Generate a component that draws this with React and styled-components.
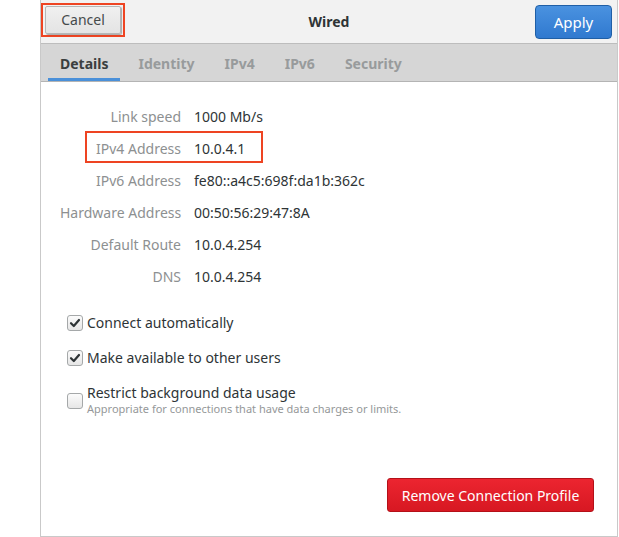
import React from 'react';
import styled, { createGlobalStyle } from 'styled-components';

const GlobalStyle = createGlobalStyle`
  html, body {
    margin: 0;
    padding: 0;
    background: #ffffff;
  }
  body {
    font-family: "Noto Sans", "Open Sans", sans-serif;
    color: #2e3436;
  }
`;

const details = [
  { label: 'Link speed', value: '1000 Mb/s' },
  { label: 'IPv4 Address', value: '10.0.4.1', marked: true },
  { label: 'IPv6 Address', value: 'fe80::a4c5:698f:da1b:362c' },
  { label: 'Hardware Address', value: '00:50:56:29:47:8A' },
  { label: 'Default Route', value: '10.0.4.254' },
  { label: 'DNS', value: '10.0.4.254' },
];

const tabs = ['Details', 'Identity', 'IPv4', 'IPv6', 'Security'];

const CheckMark = () => (
  <svg width="12" height="12" viewBox="0 0 12 12">
    <path d="M2 6.2 L4.8 9 L10 3" fill="none" stroke="#2e3436" strokeWidth="2.2" strokeLinecap="round" strokeLinejoin="round" />
  </svg>
);

const App = () => {
  return (
    <>
      <GlobalStyle />
      <Dialog>
        <HeaderBar>
          <HeaderLeft>
            <Marker>
              <PlainButton>Cancel</PlainButton>
            </Marker>
          </HeaderLeft>
          <Title>Wired</Title>
          <HeaderRight>
            <ApplyButton>Apply</ApplyButton>
          </HeaderRight>
        </HeaderBar>
        <TabBar>
          {tabs.map((t, i) => (
            <Tab key={t} $active={i === 0}>{t}</Tab>
          ))}
        </TabBar>
        <Content>
          <InfoGrid>
            {details.map((d) => (
              <InfoRow key={d.label} $marked={d.marked}>
                <Label>{d.label}</Label>
                <Value>{d.value}</Value>
              </InfoRow>
            ))}
          </InfoGrid>
          <Options>
            <Option>
              <Box $checked><CheckMark /></Box>
              <OptionText>Connect automatically</OptionText>
            </Option>
            <Option>
              <Box $checked><CheckMark /></Box>
              <OptionText>Make available to other users</OptionText>
            </Option>
            <Option $top>
              <Box />
              <div>
                <OptionText>Restrict background data usage</OptionText>
                <OptionHint>Appropriate for connections that have data charges or limits.</OptionHint>
              </div>
            </Option>
          </Options>
          <Footer>
            <RemoveButton>Remove Connection Profile</RemoveButton>
          </Footer>
        </Content>
      </Dialog>
    </>
  );
};

const Dialog = styled.div`
  margin-left: 40px;
  width: 576px;
  height: 536px;
  border-left: 1px solid #c9c9c9;
  border-right: 1px solid #c9c9c9;
  border-bottom: 1px solid #c9c9c9;
  display: flex;
  flex-direction: column;
  background: #ffffff;
`;

const HeaderBar = styled.header`
  height: 43px;
  background: #f2f2f2;
  border-bottom: 1px solid #bdbdbd;
  display: grid;
  grid-template-columns: 1fr auto 1fr;
  align-items: center;
`;

const HeaderLeft = styled.div`
  display: flex;
  justify-content: flex-start;
`;

const HeaderRight = styled.div`
  display: flex;
  justify-content: flex-end;
  padding-right: 5px;
`;

const Marker = styled.div`
  border: 2px solid #ee4422;
  padding: 1px 2px 1px 2px;
  margin-top: -4px;
  margin-left: 0;
`;

const PlainButton = styled.button`
  display: block;
  width: 76px;
  height: 28px;
  font-family: inherit;
  font-size: 14px;
  color: #454a4b;
  background: linear-gradient(#f0f0f0, #e4e4e4);
  border: 1px solid #b6b6b6;
  border-radius: 2px;
  box-shadow: 1px 1px 1px rgba(0, 0, 0, 0.3);
  padding: 0;
`;

const Title = styled.h1`
  margin: 0;
  font-size: 14px;
  font-weight: 700;
  color: #2e3436;
`;

const ApplyButton = styled.button`
  width: 77px;
  height: 34px;
  margin-top: 1px;
  font-family: inherit;
  font-size: 15px;
  color: #ffffff;
  background: linear-gradient(#4a92e0, #3079cf);
  border: 1px solid #1f5fa6;
  border-radius: 4px;
  padding: 0;
`;

const TabBar = styled.nav`
  height: 37px;
  background: #d6d6d6;
  border-bottom: 1px solid #b4b4b4;
  display: flex;
  align-items: stretch;
  padding-left: 7px;
  gap: 6px;
`;

const Tab = styled.div`
  display: flex;
  align-items: center;
  padding: 5px 12px 0;
  font-size: 14px;
  font-weight: 700;
  color: ${(p) => (p.$active ? '#3b3f40' : '#989b9c')};
  border-bottom: 3px solid ${(p) => (p.$active ? '#4a90d9' : 'transparent')};
`;

const Content = styled.main`
  flex: 1;
  display: flex;
  flex-direction: column;
  padding: 23px 23px 23px 19px;
`;

const InfoGrid = styled.div`
  display: flex;
  flex-direction: column;
  gap: 10px;
`;

const InfoRow = styled.div`
  display: grid;
  grid-template-columns: 121px auto;
  column-gap: 13px;
  align-items: center;
  height: 22px;
  font-size: 14px;
  position: relative;

  &::after {
    content: '';
    display: ${(p) => (p.$marked ? 'block' : 'none')};
    position: absolute;
    left: 25px;
    top: -6px;
    width: 174px;
    height: 28px;
    border: 2px solid #ee4422;
    pointer-events: none;
  }
`;

const Label = styled.span`
  text-align: right;
  color: #8d9091;
  white-space: nowrap;
`;

const Value = styled.span`
  color: #2e3436;
  white-space: nowrap;
`;

const Options = styled.div`
  margin-top: 26px;
  padding-left: 7px;
  display: flex;
  flex-direction: column;
  gap: 15px;
`;

const Option = styled.label`
  display: flex;
  align-items: ${(p) => (p.$top ? 'flex-start' : 'center')};
  gap: 4px;
  min-height: 20px;
  ${(p) => p.$top && 'margin-top: 1px;'}

  & > span:first-child {
    margin-top: ${(p) => (p.$top ? '9px' : '0')};
  }
`;

const Box = styled.span`
  width: 14px;
  height: 14px;
  flex: none;
  border: 1px solid #a5a8a9;
  border-radius: 3px;
  background: linear-gradient(#fbfbfb, #e6e6e6);
  display: flex;
  align-items: center;
  justify-content: center;
`;

const OptionText = styled.div`
  font-size: 14px;
  color: #2e3436;
  line-height: 18px;
`;

const OptionHint = styled.div`
  font-size: 11px;
  color: #959899;
  line-height: 14px;
`;

const Footer = styled.div`
  margin-top: auto;
  display: flex;
  justify-content: flex-end;
`;

const RemoveButton = styled.button`
  width: 207px;
  height: 34px;
  margin-bottom: 1px;
  font-family: inherit;
  font-size: 14px;
  color: #ffffff;
  background: linear-gradient(#ec2530, #d71822);
  border: 1px solid #b41018;
  border-radius: 3px;
  padding: 0;
`;

export default App;
